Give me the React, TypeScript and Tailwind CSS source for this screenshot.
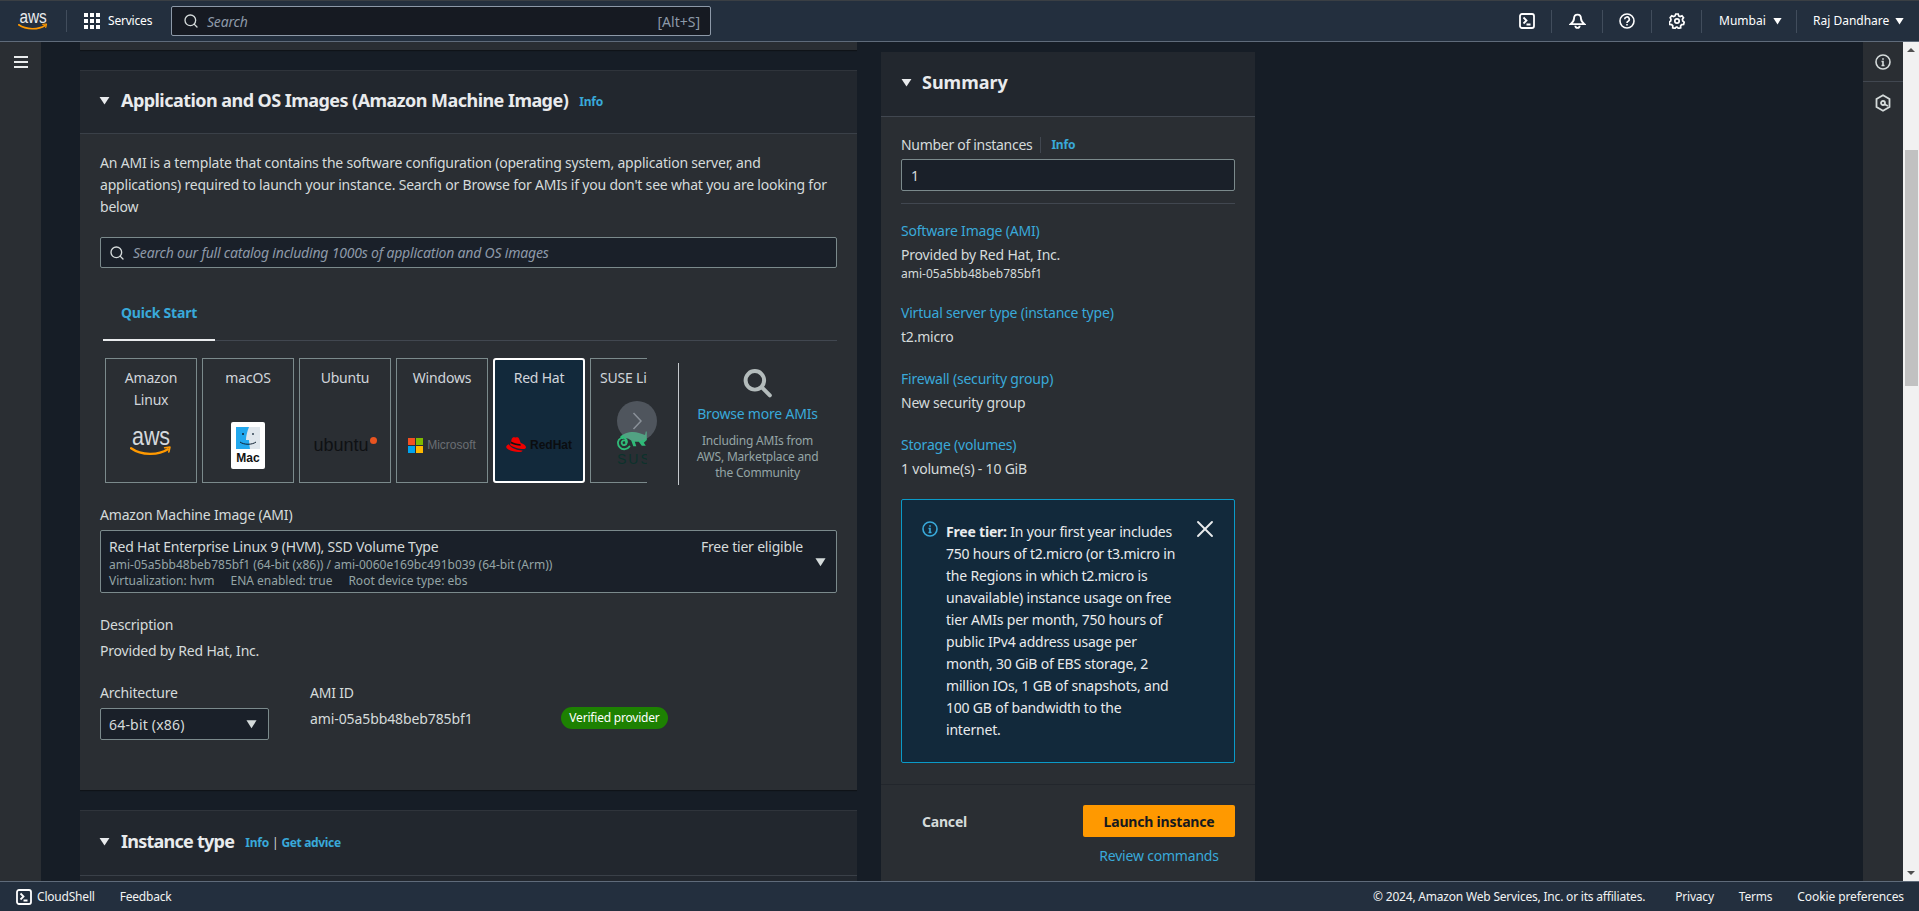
import React from "react";
import { Search, X } from "lucide-react";

const Caret = ({ className = "" }: { className?: string }) => (
  <svg viewBox="0 0 12 10" className={className} fill="currentColor"><path d="M0.5 1h11L6 9.5z" /></svg>
);

const Divider = () => <div className="w-px h-[23px] bg-[#414d5c]" />;

const AwsLogo = ({ light = true, w = 30 }: { light?: boolean; w?: number }) => (
  <svg width={w} viewBox="0 -8 40 33" fill="none">
    <text x="2" y="14" fontFamily="'Liberation Sans',sans-serif" fontSize="24" fill={light ? "#e9ebed" : "#d5d9dd"} textLength="36" lengthAdjust="spacingAndGlyphs">aws</text>
    <path d="M1 17c10 7 26 7 35 1" stroke="#f90" strokeWidth="2.2" strokeLinecap="round" />
    <path d="M33 16.500l5-.5-1 4.500" stroke="#f90" strokeWidth="1.600" strokeLinecap="round" strokeLinejoin="round" />
  </svg>
);

const ShellIcon = ({ size = 16 }: { size?: number }) => (
  <svg width={size} height={size} viewBox="0 0 16 16" fill="none" stroke="#fff" strokeWidth="1.8">
    <rect x="1" y="1" width="14" height="14" rx="2" />
    <path d="M4.500 4.500 7.500 7.500 4.500 10.500M7.500 11.500h4" />
  </svg>
);

const Tile = ({ label, children, active, clipped }: { label: React.ReactNode; children: React.ReactNode; active?: boolean; clipped?: boolean }) => (
  <div
    className={`relative shrink-0 h-[125px] w-[92px] flex flex-col items-center text-center text-[14px] leading-[22px] ${
      active ? "border-2 border-white rounded-[3px] bg-[#12293b] pt-[7px]" : "border border-[#7b8a8c] pt-[8px]"
    } ${clipped ? "whitespace-nowrap" : ""}`}
  >
    <div className="h-[46px] text-[#d1d5db]">{label}</div>
    <div className="flex-1 w-full flex items-start justify-center">{children}</div>
  </div>
);

const SumItem = ({ title, value, sub, mb = "mb-[20px]" }: { title: string; value: string; sub?: string; mb?: string }) => (
  <div className={mb}>
    <div className="text-[#39a9d9] text-[14px] leading-[20px]">{title}</div>
    <div className="mt-[4px] text-[#d5dbdb] text-[14px] leading-[20px]">{value}</div>
    {sub && <div className="text-[#d5dbdb] text-[12px] leading-[16px] mt-[1px] tracking-normal">{sub}</div>}
  </div>
);

export default function App() {
  return (
    <div className="h-[911px] w-[1919px] overflow-hidden flex flex-col bg-[#161d26] font-['Noto_Sans',sans-serif] tracking-[-0.2px] text-[#d5dbdb]">
      {/* Top bar */}
      <header className="h-[42px] shrink-0 bg-[#232f3e] border-t border-t-[#3a3f44] border-b border-b-[#5f6b7a] flex items-center text-[#fff]">
        <div className="w-[67px] pl-[18px] flex items-center shrink-0 border-r border-[#414d5c] h-[22px]">
          <div className="-mt-[5px]"><AwsLogo /></div>
        </div>
        <div className="flex items-center ml-[17px] gap-[8px] w-[87px] shrink-0">
          <div className="grid grid-cols-3 gap-[2px] w-[16px]">
            {Array.from({ length: 9 }).map((_, i) => (
              <div key={i} className="w-[4px] h-[4px] bg-white" />
            ))}
          </div>
          <span className="text-[12px]">Services</span>
        </div>
        <div className="w-[540px] h-[30px] shrink-0 bg-[#161a22] border border-[#8d99a8] rounded-[2px] flex items-center pl-[11px] pr-[10px] text-[14px]">
          <Search size={16} strokeWidth={2} color="#d5dbdb" />
          <span className="italic ml-[8px] text-[#8d99a8] flex-1">Search</span>
          <span className="text-[14px] tracking-normal text-[#8d99a8]">[Alt+S]</span>
        </div>
        <div className="flex-1" />
        <div className="flex items-center text-[12px]">
          <div className="w-[48px] flex justify-center"><ShellIcon /></div>
          <Divider />
          <div className="w-[50px] flex justify-center">
            <svg width="17" height="17" viewBox="0 0 16 16" fill="none" stroke="#fff" strokeWidth="1.8">
              <path d="M8 1.500c2.300 0 3.300 1.800 3.300 4 0 2 1.500 3.500 3.200 5H1.500c1.700-1.500 3.200-3 3.200-5 0-2.200 1-4 3.300-4z" />
              <path d="M6 12a2 2 0 0 0 4 0" />
            </svg>
          </div>
          <Divider />
          <div className="w-[48px] flex justify-center">
            <svg width="16" height="16" viewBox="0 0 16 16" fill="none" stroke="#fff" strokeWidth="1.6">
              <circle cx="8" cy="8" r="7" />
              <path d="M5.700 6.200a2.300 2.300 0 1 1 3.400 2c-.8.400-1.100.900-1.100 1.700" />
              <path d="M8 11v1.500" />
            </svg>
          </div>
          <Divider />
          <div className="w-[49px] flex justify-center">
            <svg width="16" height="16" viewBox="0 0 16 16" fill="none" stroke="#fff" strokeWidth="1.7">
              <circle cx="8" cy="8" r="2.200" />
              <path d="M6.800 1h2.400l.5 1.900 1.500.7 1.800-.8 1.500 1.900-1.100 1.600.3 1.700 1.500 1.100-.6 2.300-1.900.2-1.100 1.300.1 1.900-2.300.6-1.300-1.400h-.8l-1.300 1.400-2.300-.6.1-1.900-1.100-1.300-1.900-.2-.6-2.300 1.500-1.100.3-1.700L1.200 4.700l1.500-1.900 1.800.8 1.500-.7z" />
            </svg>
          </div>
          <Divider />
          <div className="w-[94px] flex items-center gap-[7px] pl-[17px] tracking-normal">
            <span>Mumbai</span>
            <Caret className="w-[9px] h-[8px]" />
          </div>
          <Divider />
          <div className="w-[122px] flex items-center gap-[6px] pl-[16px] whitespace-nowrap tracking-normal">
            <span>Raj Dandhare</span>
            <Caret className="w-[9px] h-[8px]" />
          </div>
        </div>
      </header>

      {/* Middle */}
      <div className="flex-1 flex min-h-0">
        <aside className="w-[41px] shrink-0 bg-[#2a2e33] pt-[13px] flex justify-center">
          <div className="w-[14px] flex flex-col gap-[3px] pt-[1px]">
            <div className="h-[2px] bg-[#e9ebed]" />
            <div className="h-[2px] bg-[#e9ebed]" />
            <div className="h-[2px] bg-[#e9ebed]" />
          </div>
        </aside>

        <main className="flex-1 flex min-w-0 pl-[39px]">
          {/* Left column */}
          <div className="w-[777px] shrink-0 flex flex-col overflow-hidden">
            <div className="h-[8px] shrink-0 bg-[#2a2e33] shadow-[0_1px_1px_#0f1318]" />
            <section className="mt-[20px] h-[720px] shrink-0 bg-[#2a2e33] shadow-[0_1px_1px_#0f1318]">
              <div className="h-[64px] bg-[#22272e] border-t border-[#2f343b] border-b border-b-[#3a4048] flex items-center pl-[19px] pb-[3px]">
                <Caret className="w-[11px] h-[9px] text-[#e9ebed]" />
                <h2 className="ml-[11px] text-[18px] tracking-[-0.55px] font-bold text-[#e9ebed]">Application and OS Images (Amazon Machine Image)</h2>
                <span className="ml-[11px] mt-[2px] text-[12px] font-bold text-[#39a9d9]">Info</span>
              </div>
              <div className="px-[20px] pt-[18px]">
                <p className="text-[14px] leading-[22px] w-[737px] text-[#d5dbdb]">
                  An AMI is a template that contains the software configuration (operating system, application server, and applications) required to launch your instance. Search or Browse for AMIs if you don&apos;t see what you are looking for below
                </p>
                <div className="mt-[19px] h-[31px] bg-[#1a2029] border border-[#7b8a8c] rounded-[2px] flex items-center px-[8px]">
                  <Search size={16} strokeWidth={2} color="#d5dbdb" />
                  <span className="italic ml-[8px] text-[14px] text-[#8d99a8]">Search our full catalog including 1000s of application and OS images</span>
                </div>
                <div className="mt-[19px] h-[54px] border-b border-[#414750] ml-[3px] flex">
                  <div className="w-[112px] h-[54px] border-b-2 border-[#e9ebed] text-center pt-[15px] text-[14px] font-bold text-[#39a9d9]">Quick Start</div>
                </div>
                <div className="mt-[17px] h-[125px] flex relative">
                  <div className="ml-[5px] w-[542px] flex gap-[5px] overflow-hidden shrink-0">
                    <Tile label={<>Amazon<br />Linux</>}>
                      <div className="pt-[9px]"><AwsLogo w={42} light={false} /></div>
                    </Tile>
                    <Tile label="macOS">
                      <div className="mt-[9px] w-[34px] h-[47px] bg-white rounded-[2px] flex flex-col items-center pt-[5px]">
                        <svg width="24" height="22" viewBox="0 0 24 22">
                          <rect width="24" height="22" fill="#dfe6ec" />
                          <path d="M0 0h13c-2 5-3 9-3 13h3c0 3 .500 6 1 9H0z" fill="#22a8ee" />
                          <circle cx="7" cy="7" r="1" fill="#123" />
                          <circle cx="17" cy="7" r="1" fill="#345" />
                          <path d="M4 15c4 3 12 3 16 0" stroke="#123" fill="none" />
                        </svg>
                        <span className="text-[#111] text-[12px] leading-[16px] mt-[1px] tracking-normal font-bold font-['Liberation_Sans',sans-serif]">Mac</span>
                      </div>
                    </Tile>
                    <Tile label="Ubuntu">
                      <div className="mt-[20px] flex items-start font-['Liberation_Sans',sans-serif] tracking-normal text-[#0f1114] text-[18px] leading-[24px]">
                        ubuntu
                        <span className="w-[7px] h-[7px] mt-[4px] ml-[1px] rounded-full bg-[#e95420]" />
                      </div>
                    </Tile>
                    <Tile label="Windows">
                      <div className="mt-[24px] flex items-center gap-[4px]">
                        <div className="grid grid-cols-2 gap-[1px] w-[15px]">
                          <div className="w-[7px] h-[7px] bg-[#f25022]" />
                          <div className="w-[7px] h-[7px] bg-[#7fba00]" />
                          <div className="w-[7px] h-[7px] bg-[#00a4ef]" />
                          <div className="w-[7px] h-[7px] bg-[#ffb900]" />
                        </div>
                        <span className="text-[12px] leading-[16px] tracking-normal text-[#6b6f73] font-['Liberation_Sans',sans-serif]">Microsoft</span>
                      </div>
                    </Tile>
                    <Tile label="Red Hat" active>
                      <div className="mt-[24px] flex items-center gap-[4px]">
                        <svg width="20" height="15" viewBox="0 0 20 15">
                          <path d="M4.500 6.500 5.700 2C6.200.3 7.700-.2 9.500.6c1.500-.6 3-.3 3.600 1.200L14.800 6c2.600 1 5.200 2.500 5.200 4.300 0 2-3 2.100-6 1.500-3.500-.7-8-2.200-9.500-3.600-.6-.7-.5-1.400 0-1.700z" fill="#e00" />
                          <path d="M4.700 6.200c3 1.600 6.500 2.400 10.100 2.500l-.4-1.800C11 7 7.700 6 5.200 4.600z" fill="#111" />
                          <path d="M2.800 7.300C.5 8.300-.6 9.800 1 11.500c2.500 2.400 8 3.500 11.500 3.500 2.500 0 4-.5 4-1.600-4.500.3-11-1.800-13.700-6.100z" fill="#e00" />
                        </svg>
                        <span className="text-[12px] leading-[14px] font-bold tracking-normal text-[#0b0d10] font-['Liberation_Sans',sans-serif]">RedHat</span>
                      </div>
                    </Tile>
                    <Tile label={<span className="block w-[92px] text-left pl-[10px]">SUSE Linux</span>} clipped>
                      <div className="mt-[18px] w-full pl-[26px] flex flex-col items-start">
                        <svg width="30" height="20" viewBox="0 0 30 20" fill="none">
                          <path d="M3 6C6 2.500 11 1 16 1c4 0 8 1.500 12 3l.8-3.500h1V9l-3 2.800 2 3h-4l-3-4h-4l1.500 4.500h-3l-2-5.500c-2-3-7-4-9-1.500z" fill="#30ba78" />
                          <path d="M9 11.500c.5-2-2.500-3-3.800-1.200-1.300 1.800.2 4.200 2.300 3.700 3-.7 3.300-4.700.8-6.500C5.500 5.500 1.500 7.500 1 11c-.5 4 3 7.700 7 7.200 2-.2 3.500-1.200 4.500-2.700" stroke="#30ba78" strokeWidth="1.800" strokeLinecap="round" />
                        </svg>
                        <span className="text-[#0c322c] text-[14px] leading-[16px] tracking-[2px] font-['Liberation_Sans',sans-serif]">SUSE</span>
                      </div>
                    </Tile>
                  </div>
                  <div className="absolute left-[517px] top-[43px] w-[40px] h-[40px] rounded-full bg-[#7d8590]/45 flex items-center justify-center">
                    <svg width="10" height="18" viewBox="0 0 10 18" fill="none" stroke="#8a9199" strokeWidth="1.500"><path d="M1.500 1 9 9l-7.500 8" /></svg>
                  </div>
                  <div className="ml-[31px] mt-[5px] w-px h-[122px] bg-[#c5c9cd] shrink-0" />
                  <div className="-ml-[1px] flex-1 flex flex-col items-center text-center">
                    <svg width="31" height="30" viewBox="0 0 34 34" fill="none" stroke="#b4bcbc" strokeWidth="4.500" className="mt-[10px]">
                      <circle cx="14" cy="14" r="10.500" />
                      <path d="M22 22 31 31" strokeLinecap="round" />
                    </svg>
                    <div className="mt-[5px] text-[14px] leading-[22px] text-[#39a9d9]">Browse more AMIs</div>
                    <div className="mt-[8px] text-[12px] leading-[16px] text-[#95a5a6] w-[130px]">Including AMIs from AWS, Marketplace and the Community</div>
                  </div>
                </div>
                <div className="mt-[22px] text-[14px] leading-[20px] text-[#d5dbdb]">Amazon Machine Image (AMI)</div>
                <div className="mt-[5px] h-[63px] bg-[#1a2029] border border-[#7b8a8c] rounded-[2px] pl-[8px] pr-[10px] pt-[6px] flex">
                  <div className="flex-1">
                    <div className="text-[14px] leading-[20px] text-[#d5dbdb]">Red Hat Enterprise Linux 9 (HVM), SSD Volume Type</div>
                    <div className="text-[12px] leading-[16px] tracking-normal text-[#95a5a6]">ami-05a5bb48beb785bf1 (64-bit (x86)) / ami-0060e169bc491b039 (64-bit (Arm))</div>
                    <div className="text-[12px] leading-[16px] tracking-normal text-[#95a5a6] flex gap-[16px]">
                      <span>Virtualization: hvm</span>
                      <span>ENA enabled: true</span>
                      <span>Root device type: ebs</span>
                    </div>
                  </div>
                  <div className="text-[14px] leading-[20px] text-[#d5dbdb] mr-[12px]">Free tier eligible</div>
                  <Caret className="w-[11px] h-[10px] mt-[20px] text-[#d5dbdb]" />
                </div>
                <div className="mt-[22px] text-[14px] leading-[20px]">Description</div>
                <div className="mt-[6px] text-[14px] leading-[20px]">Provided by Red Hat, Inc.</div>
                <div className="mt-[22px] flex">
                  <div className="w-[210px]">
                    <div className="text-[14px] leading-[20px]">Architecture</div>
                    <div className="mt-[5px] w-[169px] h-[32px] bg-[#1a2029] border border-[#7b8a8c] rounded-[2px] flex items-center justify-between pl-[8px] pr-[11px] text-[14px]">
                      <span className="tracking-[0.2px]">64-bit (x86)</span>
                      <Caret className="w-[11px] h-[10px]" />
                    </div>
                  </div>
                  <div className="w-[251px]">
                    <div className="text-[14px] leading-[20px]">AMI ID</div>
                    <div className="mt-[6px] text-[14px] leading-[20px] tracking-[-0.1px]">ami-05a5bb48beb785bf1</div>
                  </div>
                  <div className="mt-[24px] h-[22px] w-[107px] rounded-full bg-[#1d8102] text-white text-[12px] leading-[22px] text-center">Verified provider</div>
                </div>
              </div>
            </section>
            <section className="mt-[20px] flex-1 bg-[#22272e] border-t border-[#2f343b]">
              <div className="h-[65px] border-b border-[#3a4048] flex items-center pl-[19px] pb-[3px]">
                <Caret className="w-[11px] h-[9px] text-[#e9ebed]" />
                <h2 className="ml-[11px] text-[18px] tracking-[-0.75px] font-bold text-[#e9ebed]">Instance type</h2>
                <span className="ml-[11px] mt-[2px] text-[12px] font-bold text-[#39a9d9]">Info</span>
                <span className="mx-[3px] mt-[2px] text-[12px] text-[#d5dbdb]">|</span>
                <span className="mt-[2px] text-[12px] tracking-[-0.35px] font-bold text-[#39a9d9]">Get advice</span>
              </div>
            </section>
          </div>

          {/* Summary */}
          <div className="ml-[24px] mt-[10px] w-[374px] shrink-0 bg-[#2a2e33] flex flex-col">
            <div className="h-[65px] shrink-0 bg-[#22272e] border-b border-[#414750] flex items-center pl-[20px] pb-[3px]">
              <Caret className="w-[11px] h-[9px] text-[#e9ebed]" />
              <h2 className="ml-[10px] text-[18px] tracking-normal font-bold text-[#e9ebed]">Summary</h2>
            </div>
            <div className="flex-1 px-[20px] pt-[18px]">
              <div className="flex items-center text-[14px] leading-[20px]">
                <span className="tracking-[-0.3px]">Number of instances</span>
                <span className="ml-[8px] w-px h-[16px] bg-[#414750]" />
                <span className="ml-[10px] text-[12px] font-bold text-[#39a9d9]">Info</span>
              </div>
              <div className="mt-[4px] h-[32px] bg-[#1a2029] border border-[#7b8a8c] rounded-[2px] flex items-center pl-[9px] text-[14px]">1</div>
              <div className="mt-[12px] h-px bg-[#414750]" />
              <div className="pt-[17px]">
                <SumItem title="Software Image (AMI)" value="Provided by Red Hat, Inc." sub="ami-05a5bb48beb785bf1" mb="mb-[21px]" />
                <SumItem title="Virtual server type (instance type)" value="t2.micro" mb="mb-[22px]" />
                <SumItem title="Firewall (security group)" value="New security group" mb="mb-[22px]" />
                <SumItem title="Storage (volumes)" value="1 volume(s) - 10 GiB" mb="mb-[20px]" />
              </div>
              <div className="h-[264px] bg-[#12293b] border border-[#0a9ac8] rounded-[2px] flex pl-[20px] pt-[21px]">
                <svg width="16" height="16" viewBox="0 0 16 16" fill="none" stroke="#39a9d9" strokeWidth="1.600" className="shrink-0">
                  <circle cx="8" cy="8" r="7" />
                  <path d="M6.500 7.500H8v4M6.500 11.500h3M8 4.200v1.600" />
                </svg>
                <p className="ml-[8px] w-[232px] text-[14px] leading-[22px] text-[#e9ebed]">
                  <b className="font-bold">Free tier:</b> In your first year includes 750 hours of t2.micro (or t3.micro in the Regions in which t2.micro is unavailable) instance usage on free tier AMIs per month, 750 hours of public IPv4 address usage per month, 30 GiB of EBS storage, 2 million IOs, 1 GB of snapshots, and 100 GB of bandwidth to the internet.
                </p>
                <X size={28} strokeWidth={1.6} color="#e9ebed" className="ml-[13px] mt-[-6px] shrink-0" />
              </div>
            </div>
            <div className="h-[97px] shrink-0 border-t border-[#22262c] px-[20px] pt-[20px] flex">
              <div className="w-[182px] pl-[21px] h-[32px] flex items-center text-[14px] font-bold text-[#d5dbdb]">Cancel</div>
              <div className="flex flex-col items-center">
                <div className="w-[152px] h-[32px] bg-[#ff9900] rounded-[2px] flex items-center justify-center text-[14px] font-bold text-[#16191f]">Launch instance</div>
                <div className="mt-[9px] text-[14px] leading-[20px] text-[#39a9d9]">Review commands</div>
              </div>
            </div>
          </div>
          <div className="flex-1" />
        </main>

        <aside className="w-[40px] shrink-0 bg-[#2a2e33] flex flex-col">
          <div className="h-[40px] border-b border-[#414750] flex items-center justify-center">
            <svg width="16" height="16" viewBox="0 0 16 16" fill="none" stroke="#d5dbdb" strokeWidth="1.600">
              <circle cx="8" cy="8" r="7" />
              <path d="M6.500 7.500H8v4M6.500 11.500h3M8 4.200v1.600" />
            </svg>
          </div>
          <div className="h-[42px] flex items-center justify-center">
            <svg width="16" height="18" viewBox="0 0 16 18" fill="none" stroke="#d5dbdb" strokeWidth="1.800">
              <path d="M8 1.200 14.500 5v8L8 16.800 1.500 13V5z" />
              <circle cx="8" cy="9" r="2" />
              <path d="M9 10l4 2" />
            </svg>
          </div>
        </aside>

        {/* Page scrollbar */}
        <div className="w-[16px] shrink-0 bg-[#f1f1f1] flex flex-col items-center">
          <div className="h-[16px] flex items-center justify-center">
            <div className="w-0 h-0 border-x-[4px] border-x-transparent border-b-[4px] border-b-[#505050]" />
          </div>
          <div className="mt-[92px] w-[13px] h-[236px] self-end mr-[1px] bg-[#c1c1c1]" />
          <div className="flex-1" />
          <div className="h-[16px] flex items-center justify-center">
            <div className="w-0 h-0 border-x-[4px] border-x-transparent border-t-[4px] border-t-[#505050]" />
          </div>
        </div>
      </div>

      {/* Footer */}
      <footer className="h-[30px] shrink-0 bg-[#232f3e] border-t border-[#5f6b7a] flex items-center text-[12px] text-[#f2f3f3] pl-[16px]">
        <ShellIcon size={16} />
        <span className="ml-[5px]">CloudShell</span>
        <span className="ml-[25px]">Feedback</span>
        <div className="flex-1" />
        <span>© 2024, Amazon Web Services, Inc. or its affiliates.</span>
        <span className="ml-[30px]">Privacy</span>
        <span className="ml-[25px]">Terms</span>
        <span className="ml-[25px] mr-[15px] tracking-[-0.1px]">Cookie preferences</span>
      </footer>
    </div>
  );
}
